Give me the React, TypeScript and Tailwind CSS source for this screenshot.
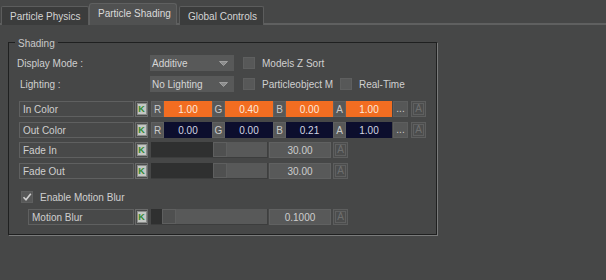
import React from "react";

const font = { fontFamily: '"Liberation Sans", Arial, sans-serif' };

function KBtn() {
  return (
    <div className="w-[13px] h-[16px] ml-[1px] border border-[#6a6b6b] bg-[#4a4b4b] flex items-center justify-center">
      <div className="w-[10px] h-[12px] bg-[#c3c6c3] border border-[#8a8c8a] flex items-center justify-center text-[9px] leading-none font-bold text-[#2f8a2f]">K</div>
    </div>
  );
}

function ABtn() {
  return (
    <div className="w-[15px] h-[16px] border border-[#5d5e5e] bg-[#4c4d4d] flex items-center justify-center">
      <div className="w-[11px] h-[12px] border border-[#5f6060] flex items-center justify-center text-[10px] leading-none text-[#6e6f6f]">A</div>
    </div>
  );
}

function LabelBox({ text, w }: { text: string; w: string }) {
  return (
    <div className={`${w} h-[16px] border border-[#5f6060] bg-[#484949] flex items-center pl-[3px] text-[#cfcfcf]`}>
      {text}
    </div>
  );
}

function Chan({ ch }: { ch: string }) {
  return (
    <div className="w-[13px] h-[16px] border border-[#5f6060] bg-[#575858] flex items-center justify-center text-[#c9c9c9]">{ch}</div>
  );
}

function Val({ v, kind, w }: { v: string; kind: "o" | "n"; w: string }) {
  const cls = kind === "o" ? "bg-[#f26d21] text-[#fde9dc]" : "bg-[#0c0e2d] text-[#d2d4e2]";
  return <div className={`${w} h-[16px] ${cls} flex items-center justify-center`}>{v}</div>;
}

function ColorRow({ label, vals, kind, mt }: { label: string; vals: string[]; kind: "o" | "n"; mt: string }) {
  return (
    <div className={`flex items-center h-[16px] ${mt} ml-[2px]`}>
      <LabelBox text={label} w="w-[115px]" />
      <KBtn />
      <div className="w-[3px]" />
      <Chan ch="R" />
      <Val v={vals[0]} kind={kind} w="w-[48px]" />
      <Chan ch="G" />
      <Val v={vals[1]} kind={kind} w="w-[48px]" />
      <Chan ch="B" />
      <Val v={vals[2]} kind={kind} w="w-[47px]" />
      <Chan ch="A" />
      <Val v={vals[3]} kind={kind} w="w-[46px]" />
      <div className="w-[15px] h-[16px] ml-[1px] bg-[#565757] border border-[#5d5e5e] flex items-end justify-center pb-[2px] text-[#cfcfcf] leading-none">...</div>
      <div className="w-[3px]" />
      <ABtn />
    </div>
  );
}

function SliderRow({ label, value, mt, dark, lw }: { label: string; value: string; mt: string; dark: string; lw: string }) {
  return (
    <div className={`flex items-center h-[16px] ${mt}`}>
      <LabelBox text={label} w={lw} />
      <KBtn />
      <div className="w-[3px]" />
      <div className="flex h-[16px] w-[117px] border-b border-[#3c3d3d]">
        <div className={`${dark} h-full bg-[#2f3030]`} />
        <div className="w-[14px] h-full bg-[#4f5050] border border-[#5e5f5f]" />
        <div className="flex-1 h-full bg-[#585959] border-r border-[#3e3f3f]" />
      </div>
      <div className="w-[1px]" />
      <div className="w-[62px] h-[16px] bg-[#585959] border border-[#606161] flex items-center justify-center text-[#cdcdcd]">{value}</div>
      <div className="w-[2px]" />
      <ABtn />
    </div>
  );
}

function Check({ checked }: { checked?: boolean }) {
  return (
    <div className="w-[12px] h-[12px] bg-[#575858] border border-[#5e5f5f] flex items-center justify-center">
      {checked && (
        <svg width="10" height="10" viewBox="0 0 10 10">
          <path d="M1.5 5.2 L4 7.8 L8.8 1.8" stroke="#d0d0d0" strokeWidth="1.6" fill="none" />
        </svg>
      )}
    </div>
  );
}

function Dropdown({ text }: { text: string }) {
  return (
    <div className="w-[84px] h-[16px] bg-[#585959] flex items-center justify-between pl-[2px] pr-[6px] text-[#d6d6d6]">
      <span>{text}</span>
      <svg width="9" height="5" viewBox="0 0 9 5">
        <path d="M0.5 0.5 L8.5 0.5 L4.5 4.5 Z" fill="#8c8d8d" stroke="#a9aaaa" strokeWidth="0.8" />
      </svg>
    </div>
  );
}

export default function App() {
  return (
    <div className="w-[606px] h-[280px] bg-[#464747] text-[10px] overflow-hidden" style={font}>
      <div className="flex items-end h-[25px] pl-[1px] border-b-2 border-[#5f6060]">
        <div className="w-[88px] h-[19px] mb-[-2px] border border-[#5c5d5d] border-b-0 bg-[#3b3c3c] rounded-t-[2px] flex items-center pl-[8px] text-[#d4d4d4]">
          Particle Physics
        </div>
        <div className="w-[88px] h-[22px] mb-[-2px] bg-[#505151] border border-[#5f6060] border-b-0 rounded-t-[3px] flex items-center pl-[8px] pb-[2px] text-[#dadada] z-10">
          Particle Shading
        </div>
        <div className="w-[2px]" />
        <div className="w-[85px] h-[19px] mb-[-2px] border border-[#5c5d5d] border-b-0 bg-[#3b3c3c] rounded-t-[2px] flex items-center pl-[8px] text-[#d4d4d4]">
          Global Controls
        </div>
      </div>
      <div className="pl-[8px] pt-[17px]">
        <div className="relative w-[429px] h-[193px] border border-[#1f2020] shadow-[1px_1px_0_#7a7b7b] pl-[8px] pt-[12px]">
          <div className="absolute left-[6px] top-[-7px] px-[3px] bg-[#464747] text-[#c9c9c9]">Shading</div>
          <div className="flex items-center h-[16px]">
            <div className="w-[133px] text-[#cfcfcf]">Display Mode :</div>
            <Dropdown text="Additive" />
            <div className="w-[9px]" />
            <Check />
            <div className="ml-[7px] text-[#d0d0d0]">Models Z Sort</div>
          </div>
          <div className="flex items-center h-[16px] mt-[5px]">
            <div className="w-[133px] pl-[3px] text-[#cfcfcf]">Lighting :</div>
            <Dropdown text="No Lighting" />
            <div className="w-[9px]" />
            <Check />
            <div className="ml-[7px] w-[78px] text-[#d0d0d0]">Particleobject M</div>
            <Check />
            <div className="ml-[7px] text-[#d0d0d0]">Real-Time</div>
          </div>
          <ColorRow label="In Color" vals={["1.00", "0.40", "0.00", "1.00"]} kind="o" mt="mt-[9px]" />
          <ColorRow label="Out Color" vals={["0.00", "0.00", "0.21", "1.00"]} kind="n" mt="mt-[5px]" />
          <div className="ml-[2px]">
            <SliderRow label="Fade In" value="30.00" mt="mt-[4px]" dark="w-[62px]" lw="w-[115px]" />
            <SliderRow label="Fade Out" value="30.00" mt="mt-[5px]" dark="w-[62px]" lw="w-[115px]" />
          </div>
          <div className="flex items-center h-[14px] mt-[11px] ml-[4px]">
            <Check checked />
            <div className="ml-[7px] text-[#cfcfcf]">Enable Motion Blur</div>
          </div>
          <div className="ml-[11px] mt-[5px]">
            <SliderRow label="Motion Blur" value="0.1000" mt="" dark="w-[11px]" lw="w-[106px]" />
          </div>
        </div>
      </div>
    </div>
  );
}
